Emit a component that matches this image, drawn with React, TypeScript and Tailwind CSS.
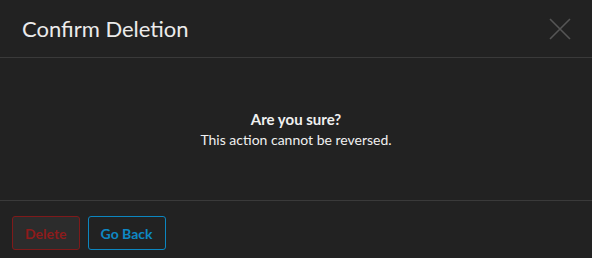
export default function App() {
  return (
    <div className="h-[258px] w-[592px] overflow-hidden bg-[#222222] font-['Lato',sans-serif]">
      <div className="flex h-[58px] items-center justify-between border-b border-[#3a3a3a] pl-[22px] pr-[21px]">
        <h2 className="text-[22px] text-[#ebebeb]">Confirm Deletion</h2>
        <button type="button" className="text-[#555555]">
          <svg width="22" height="22" viewBox="0 0 22 22" fill="none" stroke="currentColor" strokeWidth="1.6">
            <path d="M1 1L21 21M21 1L1 21" />
          </svg>
        </button>
      </div>

      <div className="flex h-[143px] flex-col items-center justify-center border-b border-[#3a3a3a] text-[#f0f0f0]">
        <p className="text-[15px] font-bold leading-[22px]">Are you sure?</p>
        <p className="text-[14px] leading-[20px]">This action cannot be reversed.</p>
      </div>

      <div className="flex gap-2 px-3 pt-[15px]">
        <button type="button" className="h-[34px] rounded-[3px] border border-[#7f1a1a] bg-[#2c2c2c] px-3 text-[14px] font-bold text-[#8e1b1b]">
          Delete
        </button>
        <button type="button" className="h-[34px] rounded-[3px] border border-[#0c86c0] px-3 text-[14px] font-bold text-[#0e88c4]">
          Go Back
        </button>
      </div>
    </div>
  );
}
